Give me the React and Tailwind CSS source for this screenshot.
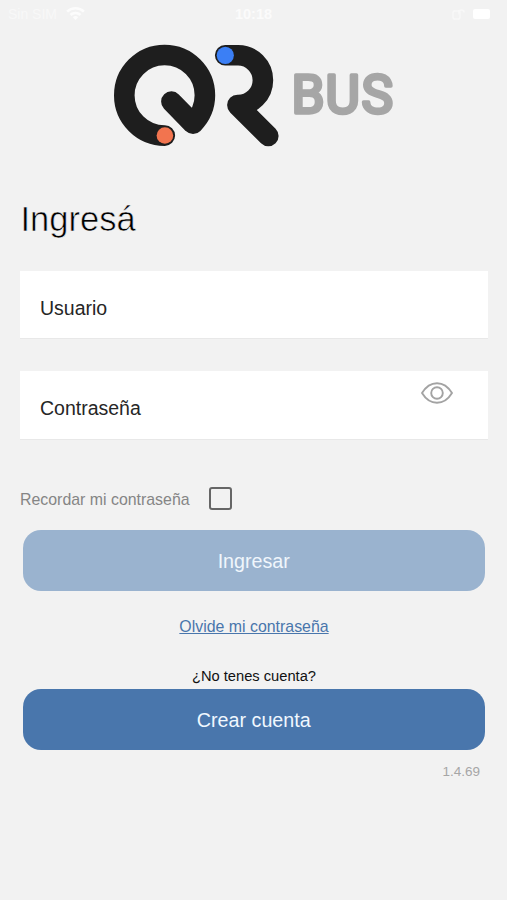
import React, { useState } from 'react';

const StatusBar = () => (
  <div className="flex h-[28px] items-center justify-between px-2 text-[14px] leading-none text-[#f8f8f8]">
    <div className="flex w-[150px] items-center gap-[9px]">
      <span>Sin SIM</span>
      <svg width="19" height="14" viewBox="0 0 19 14" fill="#fcfcfc">
        <path d="M9.5 0C5.9 0 2.6 1.400 .2 3.700l1.800 1.900a10.800 10.800 0 0 1 15 0l1.800-1.900A13.500 13.500 0 0 0 9.500 0Z" />
        <path d="M9.500 4.700c-2.300 0-4.400.9-5.900 2.300l1.900 1.900a5.800 5.800 0 0 1 8 0L15.400 7a8.500 8.500 0 0 0-5.900-2.300Z" />
        <path d="M9.500 9.100c-1 0-2 .4-2.700 1.100l2.700 2.800 2.700-2.800c-.7-.7-1.700-1.100-2.700-1.100Z" />
      </svg>
    </div>
    <span className="text-[14.500px] font-bold text-[#fbfbfb]">10:18</span>
    <div className="flex w-[150px] items-center justify-end gap-2 pr-[9px]">
      <svg width="13" height="11" viewBox="0 0 13 11" fill="none" stroke="currentColor" strokeWidth="1.5">
        <rect x="1" y="2" width="7" height="8" rx="1.500" />
        <path d="M7 5.500V3.500a2.500 2.500 0 0 1 5 0" />
      </svg>
      <div className="h-[10px] w-[17px] rounded-[2px] bg-white" />
    </div>
  </div>
);

const Logo = () => (
  <svg width="290" height="112" viewBox="110 40 290 112" fill="none" className="ml-[110px] mt-3 block">
    <g stroke="#1e1e1e" strokeWidth="20.6" strokeLinecap="round" strokeLinejoin="round">
      <path d="M164.800 135.600A40.300 40.300 0 1 1 204.900 95.300Q204.900 111.500 193 123.700L171.400 101.600" />
      <path d="M225.200 55.300H238A24.900 24.900 0 0 1 238 105.100H237.400L268.300 136" />
    </g>
    <circle cx="164.900" cy="135.500" r="8.300" fill="#f2744f" />
    <circle cx="225.300" cy="55.300" r="8.600" fill="#3b7ff5" />
    <text
      x="291.500 325.500 361.500"
      y="113"
      fill="#a6a6a6"
      stroke="#a6a6a6"
      strokeWidth="3.600"
      strokeLinejoin="round"
      fontFamily="Roboto, sans-serif"
      fontWeight="400"
      fontSize="53"
    >
      BUS
    </text>
  </svg>
);

const EyeIcon = () => (
  <svg width="34" height="24" viewBox="0 0 34 24" fill="none" stroke="#a3a3a3" strokeWidth="1.9" strokeLinejoin="round">
    <path d="M2 12Q8 2.200 17 2.200T32 12Q26 21.800 17 21.800T2 12Z" />
    <circle cx="17" cy="12" r="5.800" />
  </svg>
);

const App = () => {
  const [user, setUser] = useState('');
  const [password, setPassword] = useState('');
  const [showPassword, setShowPassword] = useState(false);
  const [remember, setRemember] = useState(false);

  return (
    <div className="min-h-screen bg-[#f2f2f2] font-['Liberation_Sans',Arial,sans-serif]">
      <StatusBar />
      <Logo />

      <form onSubmit={(e) => e.preventDefault()} className="flex flex-col pl-5 pr-[19px]">
        <h1 className="mt-[46px] pl-[0.500px] text-[34.500px] leading-[42px] text-black [-webkit-text-stroke:0.6px_#f2f2f2]">Ingresá</h1>

        <div className="mt-[31px] flex h-[68px] items-center border-b border-[#e8e8e8] bg-white px-5 pt-[8px]">
          <input
            type="text"
            value={user}
            onChange={(e) => setUser(e.target.value)}
            placeholder="Usuario"
            className="w-full text-[19.500px] outline-none placeholder:text-[#262626]"
          />
        </div>

        <div className="mt-8 flex h-[69px] border-b border-[#e8e8e8] bg-white pl-5 pr-[34px]">
          <input
            type={showPassword ? 'text' : 'password'}
            value={password}
            onChange={(e) => setPassword(e.target.value)}
            placeholder="Contraseña"
            className="min-w-0 flex-1 pt-[7px] text-[19.500px] outline-none placeholder:text-[#262626]"
          />
          <button type="button" onClick={() => setShowPassword(!showPassword)} className="mt-[10px] h-6">
            <EyeIcon />
          </button>
        </div>

        <label className="mt-[46px] flex h-6 items-center gap-[19px] text-[15.900px] text-[#858585]">
          <span className="pt-[3px]">Recordar mi contraseña</span>
          <input
            type="checkbox"
            checked={remember}
            onChange={(e) => setRemember(e.target.checked)}
            className="size-[23px] appearance-none rounded-[3px] border-2 border-[#666] checked:bg-[#4976ac]"
          />
        </label>

        <button type="submit" className="ml-[2.500px] mr-[3px] mt-5 h-[61px] rounded-[18px] bg-[#9ab3cf] pt-[2px] text-[19.700px] text-[#f0f6fc]">
          Ingresar
        </button>

        <a href="#" className="mt-[26px] self-center text-[15.900px] leading-5 text-[#4976ac] underline">
          Olvide mi contraseña
        </a>

        <p className="mt-[29px] text-center text-[14.700px] leading-5 text-[#111]">¿No tenes cuenta?</p>
        <button type="button" className="ml-[2.500px] mr-[3px] mt-[3px] h-[61px] rounded-[18px] bg-[#4976ac] pt-[2px] text-[19.700px] text-[#f0f8ff]">
          Crear cuenta
        </button>

        <span className="mr-[8px] mt-3 self-end text-[13.500px] leading-5 text-[#a6a6a6]">1.4.69</span>
      </form>
    </div>
  );
};

export default App;
